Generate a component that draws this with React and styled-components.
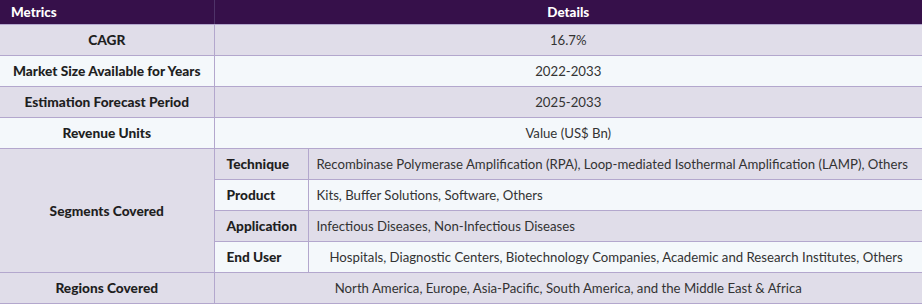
import React from "react";
import styled, { createGlobalStyle } from "styled-components";

const Global = createGlobalStyle`
  html, body { margin: 0; padding: 0; background: #ffffff; }
  body { font-family: Lato, "Open Sans", sans-serif; }
`;

const Table = styled.table`
  width: 922px;
  border-collapse: collapse;
  table-layout: fixed;
  font-family: Lato, "Open Sans", sans-serif;
  font-size: 13.2px;
  color: #2b2b2b;
`;

const HeadRow = styled.tr`
  height: 24px;
  background: #36104a;
`;

const HeadCell = styled.th`
  color: #ffffff;
  font-weight: 900;
  font-size: 13.4px;
  padding: 0 11px;
  text-align: ${(p) => p.$align || "center"};
  border-bottom: 1px solid #b3a7cd;
  border-left: ${(p) => (p.$first ? "none" : "1px solid #4e3368")};
`;

const Row = styled.tr`
  height: 31px;
  background: ${(p) => (p.$alt ? "#f4f8fb" : "#e0dde9")};
`;

const Cell = styled.td`
  padding: 0 8px 0 ${(p) => p.$pl || "8px"};
  text-align: ${(p) => p.$align || "left"};
  font-weight: ${(p) => (p.$bold ? 900 : 400)};
  font-size: ${(p) => (p.$bold ? "13.7px" : "13.2px")};
  border-bottom: 1px solid #b3a7cd;
  border-left: ${(p) => (p.$first ? "none" : "1px solid #b3a7cd")};
  white-space: nowrap;
  color: ${(p) => (p.$bold ? "#1f1f1f" : "#333333")};
  background: ${(p) => (p.$bg ? p.$bg : "transparent")};
`;

const simpleRows = [
  ["CAGR", "16.7%"],
  ["Market Size Available for Years", "2022-2033"],
  ["Estimation Forecast Period", "2025-2033"],
  ["Revenue Units", "Value (US$ Bn)"],
];

const segments = [
  ["Technique", "Recombinase Polymerase Amplification (RPA), Loop-mediated Isothermal Amplification (LAMP), Others"],
  ["Product", "Kits, Buffer Solutions, Software, Others"],
  ["Application", "Infectious Diseases, Non-Infectious Diseases"],
  ["End User", "Hospitals, Diagnostic Centers, Biotechnology Companies, Academic and Research Institutes, Others", true],
];

export default function App() {
  return (
    <>
      <Global />
      <Table>
        <colgroup>
          <col style={{ width: 214 }} />
          <col style={{ width: 94 }} />
          <col />
        </colgroup>
        <thead>
          <HeadRow>
            <HeadCell $first $align="left">Metrics</HeadCell>
            <HeadCell colSpan={2}>Details</HeadCell>
          </HeadRow>
        </thead>
        <tbody>
          {simpleRows.map(([k, v], i) => (
            <Row key={k} $alt={i % 2 === 1}>
              <Cell $first $bold $align="center">{k}</Cell>
              <Cell colSpan={2} $align="center">{v}</Cell>
            </Row>
          ))}
          {segments.map(([k, v, indent], i) => (
            <Row key={k} $alt={i % 2 === 1}>
              {i === 0 && (
                <Cell $first $bold $align="center" rowSpan={4} $bg="#e0dde9">
                  Segments Covered
                </Cell>
              )}
              <Cell $bold $pl="12px">{k}</Cell>
              <Cell $pl={indent ? "21px" : "8px"}>{v}</Cell>
            </Row>
          ))}
          <Row>
            <Cell $first $bold $align="center">Regions Covered</Cell>
            <Cell colSpan={2} $align="center">
              North America, Europe, Asia-Pacific, South America, and the Middle East &amp; Africa
            </Cell>
          </Row>
        </tbody>
      </Table>
    </>
  );
}
